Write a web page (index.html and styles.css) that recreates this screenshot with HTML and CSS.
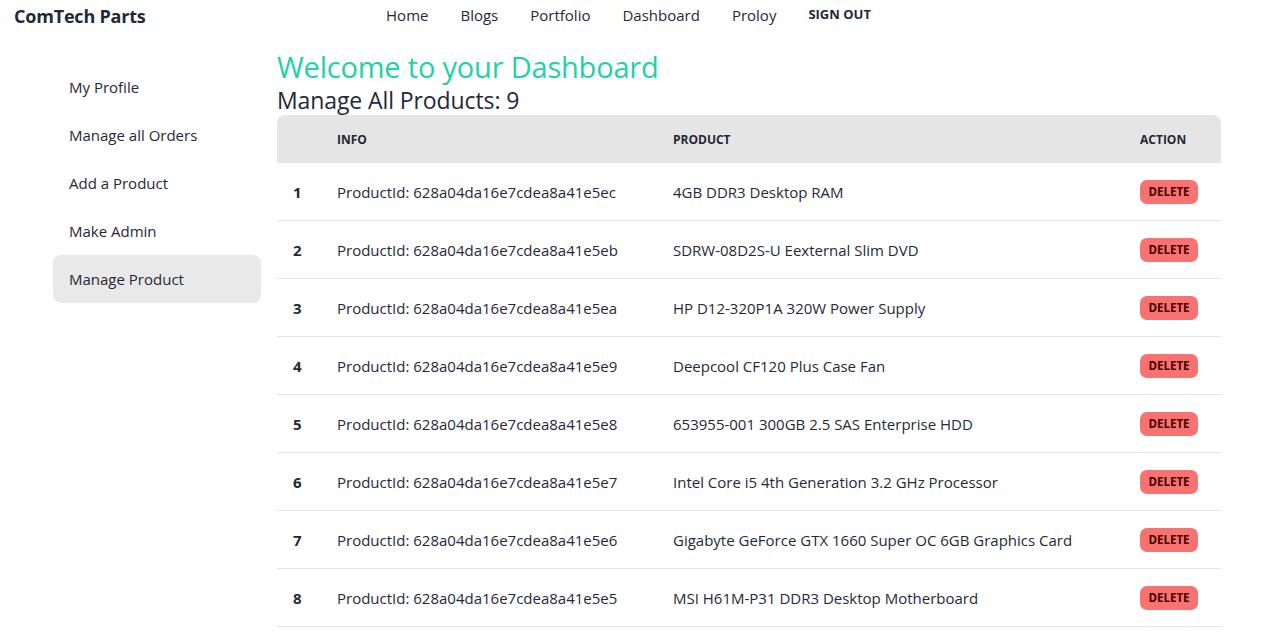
FILE: index.html
```html
<!DOCTYPE html>
<html lang="en">
<head>
<meta charset="utf-8">
<title>ComTech Parts - Dashboard</title>
<link rel="stylesheet" href="styles.css">
</head>
<body>
<header class="navbar">
  <a class="brand">ComTech Parts</a>
  <nav class="nav">
    <a class="nav-link">Home</a>
    <a class="nav-link">Blogs</a>
    <a class="nav-link">Portfolio</a>
    <a class="nav-link">Dashboard</a>
    <a class="nav-link">Proloy</a>
    <button class="signout">SIGN OUT</button>
  </nav>
  <div></div>
</header>
<div class="layout">
  <aside class="sidebar">
    <a class="side-item">My Profile</a>
    <a class="side-item">Manage all Orders</a>
    <a class="side-item">Add a Product</a>
    <a class="side-item">Make Admin</a>
    <a class="side-item active">Manage Product</a>
  </aside>
  <main class="main">
    <h1 class="welcome">Welcome to your Dashboard</h1>
    <h2 class="subtitle">Manage All Products: 9</h2>
    <table class="table">
      <colgroup>
        <col class="c-num"><col class="c-info"><col class="c-prod"><col class="c-act">
      </colgroup>
      <thead>
        <tr><th></th><th>Info</th><th>Product</th><th>Action</th></tr>
      </thead>
      <tbody>
        <tr><td class="num">1</td><td>ProductId: 628a04da16e7cdea8a41e5ec</td><td>4GB DDR3 Desktop RAM</td><td><button class="del">DELETE</button></td></tr>
        <tr><td class="num">2</td><td>ProductId: 628a04da16e7cdea8a41e5eb</td><td>SDRW-08D2S-U Eexternal Slim DVD</td><td><button class="del">DELETE</button></td></tr>
        <tr><td class="num">3</td><td>ProductId: 628a04da16e7cdea8a41e5ea</td><td>HP D12-320P1A 320W Power Supply</td><td><button class="del">DELETE</button></td></tr>
        <tr><td class="num">4</td><td>ProductId: 628a04da16e7cdea8a41e5e9</td><td>Deepcool CF120 Plus Case Fan</td><td><button class="del">DELETE</button></td></tr>
        <tr><td class="num">5</td><td>ProductId: 628a04da16e7cdea8a41e5e8</td><td>653955-001 300GB 2.5 SAS Enterprise HDD</td><td><button class="del">DELETE</button></td></tr>
        <tr><td class="num">6</td><td>ProductId: 628a04da16e7cdea8a41e5e7</td><td>Intel Core i5 4th Generation 3.2 GHz Processor</td><td><button class="del">DELETE</button></td></tr>
        <tr><td class="num">7</td><td>ProductId: 628a04da16e7cdea8a41e5e6</td><td>Gigabyte GeForce GTX 1660 Super OC 6GB Graphics Card</td><td><button class="del">DELETE</button></td></tr>
        <tr><td class="num">8</td><td>ProductId: 628a04da16e7cdea8a41e5e5</td><td>MSI H61M-P31 DDR3 Desktop Motherboard</td><td><button class="del">DELETE</button></td></tr>
        <tr><td class="num">9</td><td>ProductId: 628a04da16e7cdea8a41e5e4</td><td>Corsair Vengeance 8GB DDR4 RAM</td><td><button class="del">DELETE</button></td></tr>
      </tbody>
    </table>
  </main>
</div>
</body>
</html>
```
FILE: styles.css
```css
* { box-sizing: border-box; }
html, body { margin: 0; padding: 0; background: #fff; }
body {
  font-family: "Open Sans", "Noto Sans", sans-serif;
  color: #1f2937;
  font-size: 15px;
}
a { color: inherit; text-decoration: none; }

.navbar {
  height: 32px;
  display: grid;
  grid-template-columns: 1fr auto 1fr;
  align-items: center;
  padding-left: 14px;
}
.brand {
  font-size: 18px;
  font-weight: 700;
  color: #1f2937;
  justify-self: start;
  letter-spacing: -0.2px;
}
.nav {
  display: flex;
  align-items: center;
  margin-left: -32px;
  margin-top: -3px;
}
.nav-link {
  font-size: 15px;
  padding: 0 16px;
  color: #1f2937;
}
.signout {
  font-family: inherit;
  font-size: 13px;
  font-weight: 700;
  border: 0;
  background: none;
  color: #1f2937;
  padding: 0 16px;
  margin-top: -1px;
}

.layout {
  display: flex;
  align-items: flex-start;
  padding-top: 17px;
}
.sidebar {
  width: 277px;
  flex: none;
  padding: 14px 16px 0 53px;
  display: flex;
  flex-direction: column;
}
.side-item {
  display: flex;
  align-items: center;
  height: 48px;
  padding-left: 16px;
  font-size: 15px;
  border-radius: 8px;
}
.side-item.active { background: #e9e9e9; }

.main {
  width: 944px;
  flex: none;
}
.welcome {
  margin: 0;
  font-size: 29px;
  font-weight: 400;
  line-height: 36px;
  color: #22d1a6;
  letter-spacing: -0.2px;
}
.subtitle {
  margin: 0;
  font-size: 23px;
  font-weight: 400;
  line-height: 30px;
  color: #1f2937;
  letter-spacing: -0.1px;
}

.table {
  width: 944px;
  border-collapse: separate;
  border-spacing: 0;
  table-layout: fixed;
}
.c-num { width: 44px; }
.c-info { width: 336px; }
.c-prod { width: 467px; }
.c-act { width: 97px; }
.table th {
  background: #e5e5e5;
  height: 48px;
  padding: 0 16px;
  text-align: left;
  font-size: 12px;
  font-weight: 700;
  text-transform: uppercase;
}
.table th:first-child { border-top-left-radius: 8px; }
.table th:last-child { border-top-right-radius: 8px; }
.table td {
  height: 58px;
  padding: 0 16px;
  border-bottom: 1px solid #e6e6e6;
  font-size: 15px;
  white-space: nowrap;
}
.table td.num { font-weight: 700; }
.del {
  font-family: inherit;
  font-size: 11.5px;
  font-weight: 700;
  background: #f87272;
  color: #470000;
  border: 0;
  border-radius: 7px;
  height: 24px;
  width: 58px;
  padding: 0;
}
```
